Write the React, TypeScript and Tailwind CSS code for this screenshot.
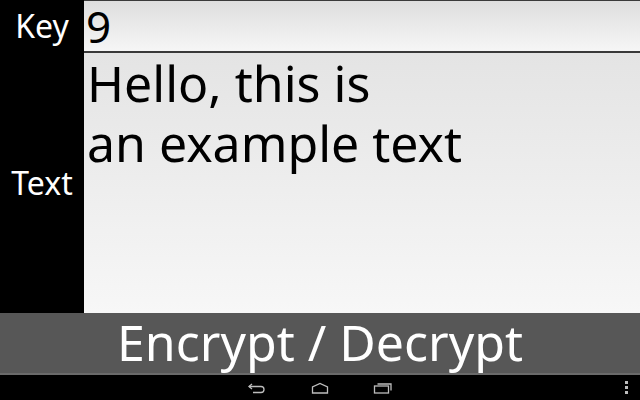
export default function App() {
  const font = { fontFamily: '"Noto Sans", "Open Sans", sans-serif' };
  return (
    <div className="flex h-[400px] w-[640px] flex-col overflow-hidden bg-black" style={font}>
      <div className="flex h-[313px]">
        <div className="flex w-[84px] flex-col text-[32px] text-white">
          <div className="flex h-[52px] items-center justify-center leading-[40px]">Key</div>
          <div className="flex flex-1 items-center justify-center leading-[40px]">Text</div>
        </div>
        <div className="flex flex-1 flex-col">
          <div className="flex h-[53px] items-center border-b-2 border-t border-[#3a3a3a] bg-gradient-to-b from-[#dedede] to-[#f6f6f6] pl-[2px] text-[44px] leading-[48px] text-black">
            9
          </div>
          <div className="flex-1 bg-gradient-to-b from-[#e4e4e4] to-[#f7f7f7] pl-[3px] text-[50px] leading-[60px] text-black">
            Hello, this is
            <br />
            an example text
          </div>
        </div>
      </div>
      <button className="flex h-[62px] items-center justify-center border-b-2 border-[#6a6a6a] bg-[#575757] pb-[2px] text-[50px] leading-[56px] text-white">
        Encrypt / Decrypt
      </button>
      <div className="relative flex h-[25px] items-center justify-center gap-[44px] bg-black">
        <svg width="20" height="12" viewBox="0 0 20 12" fill="none" stroke="#bdbdbd" strokeWidth="1.3">
          <path d="M5 2 L2 4.5 L5 7" />
          <path d="M2 4.5 H14 Q17 4.5 17 7.5 Q17 10.5 14 10.5 H6" />
        </svg>
        <svg width="18" height="12" viewBox="0 0 18 12" fill="none" stroke="#bdbdbd" strokeWidth="1.3">
          <path d="M1.5 11 V5 L9 1.5 L16.5 5 V11 Z" />
        </svg>
        <svg width="20" height="13" viewBox="0 0 20 13" fill="none" stroke="#bdbdbd" strokeWidth="1.3">
          <rect x="1.5" y="5" width="14" height="7" />
          <path d="M4.5 3 H18 V9.5" />
        </svg>
        <div className="absolute right-[12px] top-[6px] flex flex-col gap-[2px]">
          <div className="h-[3px] w-[3px] bg-[#bdbdbd]" />
          <div className="h-[3px] w-[3px] bg-[#bdbdbd]" />
          <div className="h-[3px] w-[3px] bg-[#bdbdbd]" />
        </div>
      </div>
    </div>
  );
}
